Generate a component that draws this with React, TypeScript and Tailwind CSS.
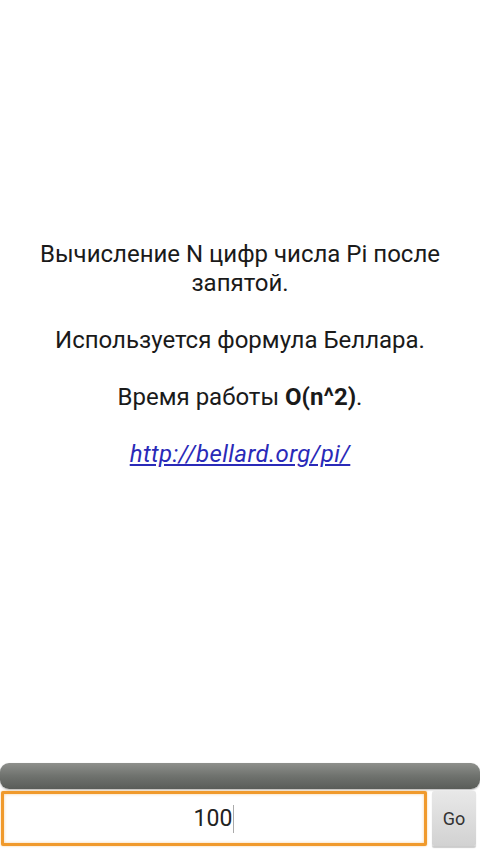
export default function App() {
  return (
    <div
      className="flex h-[854px] w-[480px] flex-col bg-white"
      style={{ fontFamily: 'Roboto, "Noto Sans", sans-serif' }}
    >
      <div className="flex flex-1 flex-col items-center pt-[240px] text-center text-[24px] leading-[28.5px] text-[#1a1a1a]">
        <p className="px-[30px]">Вычисление N цифр числа Pi после запятой.</p>
        <p className="mt-[28.5px]">Используется формула Беллара.</p>
        <p className="mt-[28.5px]">
          Время работы <b className="font-bold">O(n^2)</b>.
        </p>
        <p className="mt-[28.5px]">
          <a href="#" className="italic tracking-[0.4px] text-[#2a2ab8] underline underline-offset-2">
            http://bellard.org/pi/
          </a>
        </p>
      </div>

      <div className="h-[26px] rounded-[9px] bg-gradient-to-b from-[#8e908c] via-[#6f726e] to-[#5a5d59] shadow-[0_1px_2px_rgba(0,0,0,0.3)]" />

      <div className="flex h-[65px] items-stretch gap-[5px] pb-[8px] pt-[2px] pl-[1px] pr-[4px]">
        <div className="flex flex-1 items-center justify-center rounded-[2px] border-[3px] border-[#f09a2c] bg-white shadow-[inset_0_0_3px_rgba(240,160,60,0.5),0_0_2px_rgba(240,160,60,0.6)]">
          <span className="text-[23px] leading-none text-[#222]">100</span>
          <span className="ml-[1px] h-[28px] w-[1px] bg-[#aaa]" />
        </div>
        <button className="flex w-[44px] items-center justify-center rounded-[2px] bg-gradient-to-b from-[#e8e8e8] to-[#d2d2d2] text-[18px] text-[#333] shadow-[0_2px_1px_rgba(0,0,0,0.2)]">
          Go
        </button>
      </div>
    </div>
  );
}
